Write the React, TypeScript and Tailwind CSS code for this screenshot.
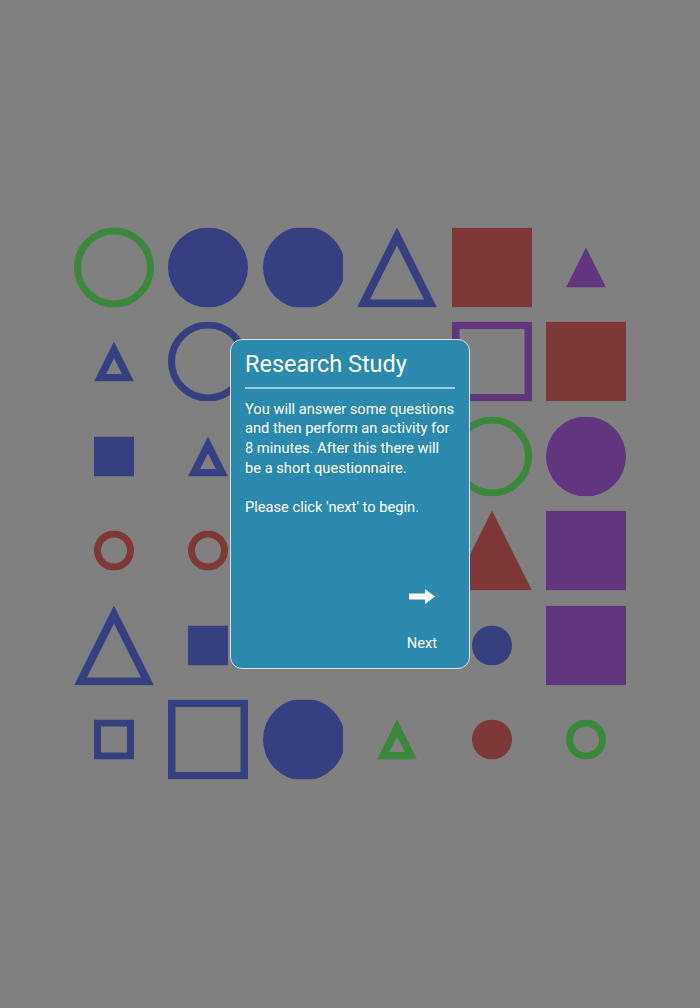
import React from "react";

type Kind = "circle" | "ring" | "square" | "sqo" | "tri" | "trio" | "clipcircle";
type Cell = { k: Kind; c: string; s: number } | null;

const G = "#3b873b";
const B = "#363f7f";
const R = "#7f3838";
const P = "#62367e";

const grid: Cell[][] = [
  [
    { k: "ring", c: G, s: 80 },
    { k: "circle", c: B, s: 80 },
    { k: "clipcircle", c: B, s: 80 },
    { k: "trio", c: B, s: 80 },
    { k: "square", c: R, s: 80 },
    { k: "tri", c: P, s: 40 },
  ],
  [
    { k: "trio", c: B, s: 40 },
    { k: "ring", c: B, s: 80 },
    null,
    null,
    { k: "sqo", c: P, s: 80 },
    { k: "square", c: R, s: 80 },
  ],
  [
    { k: "square", c: B, s: 40 },
    { k: "trio", c: B, s: 40 },
    null,
    null,
    { k: "ring", c: G, s: 80 },
    { k: "circle", c: P, s: 80 },
  ],
  [
    { k: "ring", c: R, s: 40 },
    { k: "ring", c: R, s: 40 },
    null,
    null,
    { k: "tri", c: R, s: 80 },
    { k: "square", c: P, s: 80 },
  ],
  [
    { k: "trio", c: B, s: 80 },
    { k: "square", c: B, s: 40 },
    null,
    null,
    { k: "circle", c: B, s: 40 },
    { k: "square", c: P, s: 80 },
  ],
  [
    { k: "sqo", c: B, s: 40 },
    { k: "sqo", c: B, s: 80 },
    { k: "clipcircle", c: B, s: 80 },
    { k: "trio", c: G, s: 40 },
    { k: "circle", c: R, s: 40 },
    { k: "ring", c: G, s: 40 },
  ],
];

function triOutlinePath(s: number, d: number) {
  const side = Math.sqrt((s / 2) * (s / 2) + s * s);
  const area = (s * s) / 2;
  const r = (2 * area) / (s + 2 * side);
  const cx = s / 2;
  const cy = s - r;
  const k = (r - d) / r;
  const p = (x: number, y: number) => [cx + (x - cx) * k, cy + (y - cy) * k];
  const [ax, ay] = p(s / 2, 0);
  const [bx, by] = p(0, s);
  const [qx, qy] = p(s, s);
  return `M${s / 2} 0 L${s} ${s} L0 ${s} Z M${ax} ${ay} L${bx} ${by} L${qx} ${qy} Z`;
}

function Shape({ cell }: { cell: Cell }) {
  if (!cell) return <div className="w-[80px] h-[80px]" />;
  const { k, c, s } = cell;
  let inner: React.ReactNode = null;
  if (k === "circle") inner = <circle cx={s / 2} cy={s / 2} r={s / 2} fill={c} />;
  if (k === "clipcircle") inner = <circle cx={41} cy={40} r={41} fill={c} />;
  if (k === "ring") inner = <circle cx={s / 2} cy={s / 2} r={s / 2 - 3.5} fill="none" stroke={c} strokeWidth={7} />;
  if (k === "square") inner = <rect x={0} y={0} width={s} height={s} fill={c} />;
  if (k === "sqo") {
    const w = s === 80 ? 7.5 : 7;
    inner = <rect x={w / 2} y={w / 2} width={s - w} height={s - w} fill="none" stroke={c} strokeWidth={w} />;
  }
  if (k === "tri") inner = <polygon points={`${s / 2},0 ${s},${s} 0,${s}`} fill={c} />;
  if (k === "trio") inner = <path d={triOutlinePath(s, s === 80 ? 8 : 7.5)} fill={c} fillRule="evenodd" />;
  return (
    <div className="w-[80px] h-[80px] flex items-center justify-center overflow-hidden">
      <svg width={s} height={s} viewBox={`0 0 ${s} ${s}`} className="block">
        {inner}
      </svg>
    </div>
  );
}

export default function App() {
  return (
    <div
      className="relative w-full h-[1008px] bg-[#808080] flex items-center justify-center overflow-hidden"
      style={{ fontFamily: "Roboto, 'Noto Sans', sans-serif" }}
    >
      <div className="grid grid-cols-[repeat(6,80px)] grid-rows-[repeat(6,80px)] gap-[14.6px] -translate-y-[0.5px]">
        {grid.flatMap((row, i) => row.map((cell, j) => <Shape key={`${i}-${j}`} cell={cell} />))}
      </div>

      <div className="absolute inset-0 flex items-center justify-center">
        <div className="w-[240px] h-[330px] rounded-[12px] border border-[#d4e3ea] bg-[#2a89ad] flex flex-col px-[14px] pt-[11px] pb-[16px] text-white">
          <div className="text-[23.47px] leading-[27.5px]">Research Study</div>
          <div className="mt-[8px] h-[2px] bg-[#9fcadc]" />
          <div className="mt-[11px] text-[14.67px] leading-[19.8px]">
            You will answer some questions and then perform an activity for 8 minutes. After this there will be a
            short questionnaire.
            <br />
            <br />
            Please click 'next' to begin.
          </div>
          <div className="mt-auto self-end w-[66px] flex flex-col items-center">
            <svg width="26" height="15" viewBox="0 0 26 15" className="block">
              <path d="M0 4.5 H16 V0 L26 7.5 L16 15 V10.5 H0 Z" fill="#ffffff" />
            </svg>
            <div className="mt-[31px] text-[14.67px] leading-[17.2px]">Next</div>
          </div>
        </div>
      </div>
    </div>
  );
}
